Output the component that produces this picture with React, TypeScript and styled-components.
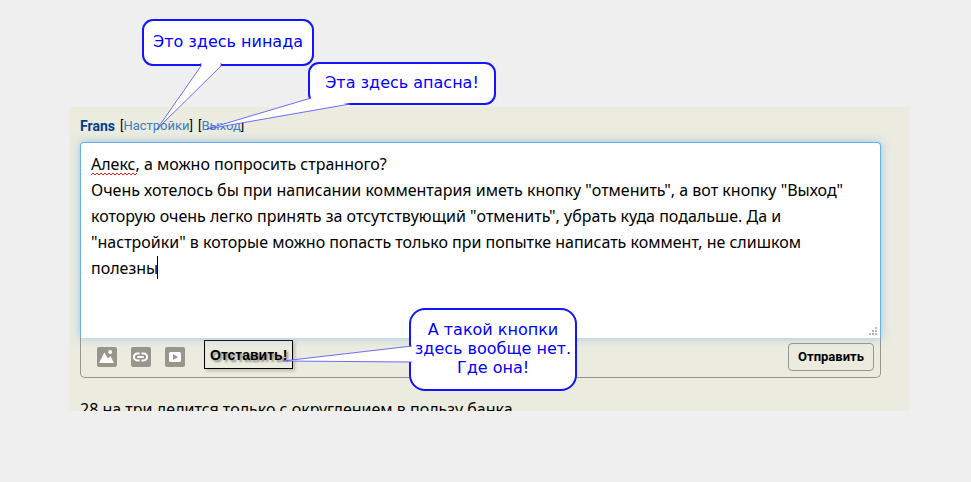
import React from 'react';
import styled, { createGlobalStyle } from 'styled-components';

const GlobalStyle = createGlobalStyle`
  *, *::before, *::after { box-sizing: border-box; }
  body {
    margin: 0;
    background: #efefef;
    color: #000;
    font-family: 'Noto Sans', 'Open Sans', sans-serif;
    font-size: 16px;
    line-height: 26px;
  }
`;

const Page = styled.div`
  padding: 107px 62px 71px 69px;
`;

const Sheet = styled.main`
  position: relative;
  padding: 6px 28px 0 11px;
  background: #ebebdf;
`;

const UserBar = styled.header`
  display: flex;
  align-items: center;
  gap: 5px;
  height: 26px;
  font-family: Roboto, 'Noto Sans', sans-serif;
  font-size: 13px;
`;

const UserName = styled.strong`
  color: #003e8f;
  font-size: 14px;
`;

const UserLink = styled.a`
  color: #3a7ebf;
  text-decoration: none;
`;

const Form = styled.form`
  display: flex;
  flex-direction: column;
  margin-top: 3px;
`;

const Editor = styled.div`
  position: relative;
  z-index: 1;
  display: flex;
  border-radius: 4px 4px 0 0;
  box-shadow: 0 0 8px rgba(102, 175, 233, 0.6);
`;

const CommentInput = styled.textarea`
  flex: 1;
  height: 196px;
  margin: 0;
  padding: 8px 10px;
  border: 1px solid #66afe9;
  border-bottom: 0;
  border-radius: 4px 4px 0 0;
  outline: 0;
  background: #fff;
  color: #000;
  font: inherit;
  resize: none;
  overflow: hidden;
`;

const SpellingMark = styled.svg`
  position: absolute;
  top: 30px;
  left: 11px;
  width: 46px;
  height: 4px;
`;

const Caret = styled.span`
  position: absolute;
  top: 114px;
  left: 77px;
  width: 1px;
  height: 23px;
  background: #000;
`;

const Grip = styled.svg`
  position: absolute;
  right: 3px;
  bottom: 2px;
  width: 9px;
  height: 9px;
`;

const Toolbar = styled.div`
  display: flex;
  align-items: center;
  gap: 14px;
  height: 40px;
  padding: 0 6px 2px 16px;
  border: 1px solid #97968c;
  border-top: 0;
  border-radius: 0 0 5px 5px;
`;

const IconButton = styled.button`
  display: flex;
  width: 20px;
  height: 20px;
  padding: 0;
  border: 0;
  border-radius: 2px;
  background: #97968c;
  color: #fff;
`;

const CancelButton = styled.button`
  height: 29px;
  margin: 0 0 4px 5px;
  padding: 0 5px;
  border: 1px solid #000;
  background: #ebebdf;
  box-shadow: 2px 2px 3px rgba(0, 0, 0, 0.2);
  color: #000;
  font: bold 14px/20px 'Liberation Sans', Arial, sans-serif;
  text-shadow: 2px 2px 2px rgba(0, 0, 0, 0.4);
`;

const SubmitButton = styled.button`
  width: 86px;
  height: 28px;
  margin-left: auto;
  padding: 0;
  border: 1px solid #97968c;
  border-radius: 4px;
  background: transparent;
  color: #000;
  font: bold 13px/20px Roboto, 'Noto Sans', sans-serif;
`;

const NextComment = styled.p`
  height: 15px;
  margin: 18px 0 0;
  overflow: hidden;
`;

type Spot = { $top: number; $left: number; $width: number; $height: number; $radius: number };

const Bubble = styled.aside<Spot>`
  position: absolute;
  z-index: 2;
  top: ${p => p.$top}px;
  left: ${p => p.$left}px;
  display: flex;
  align-items: center;
  justify-content: center;
  width: ${p => p.$width}px;
  height: ${p => p.$height}px;
  padding-bottom: 2px;
  border: 2px solid #1414ff;
  border-radius: ${p => p.$radius}px;
  background: #fff;
  color: #0000ff;
  font: 16px/19px 'DejaVu Sans', sans-serif;
  text-align: center;
  white-space: pre;
`;

const TailDrawing = styled.svg`
  position: absolute;
  top: -2px;
  left: -2px;
  width: 100%;
  height: 100%;
  overflow: visible;
`;

const BubbleText = styled.span`
  position: relative;
`;

function Callout({ tail, children, ...spot }: Spot & { tail: string; children: React.ReactNode }) {
  return (
    <Bubble {...spot}>
      <TailDrawing aria-hidden="true">
        <polyline points={tail} fill="#fff" stroke="#4a4aff" strokeWidth="0.8" />
      </TailDrawing>
      <BubbleText>{children}</BubbleText>
    </Bubble>
  );
}

const comment = `Алекс, а можно попросить странного?
Очень хотелось бы при написании комментария иметь кнопку "отменить", а вот кнопку "Выход" которую очень легко принять за отсутствующий "отменить", убрать куда подальше. Да и "настройки" в которые можно попасть только при попытке написать коммент, не слишком полезны`;

export default function App() {
  return (
    <Page>
      <GlobalStyle />
      <Sheet>
        <UserBar>
          <UserName>Frans</UserName>
          <span>[<UserLink href="#settings">Настройки</UserLink>]</span>
          <span>[<UserLink href="#logout">Выход</UserLink>]</span>
        </UserBar>
        <Form onSubmit={e => e.preventDefault()}>
          <Editor>
            <CommentInput aria-label="Комментарий" spellCheck={false} defaultValue={comment} />
            <SpellingMark viewBox="0 0 46 4" aria-hidden="true">
              <path
                d="M0 3 L2 1 L4 3 L6 1 L8 3 L10 1 L12 3 L14 1 L16 3 L18 1 L20 3 L22 1 L24 3 L26 1 L28 3 L30 1 L32 3 L34 1 L36 3 L38 1 L40 3 L42 1 L44 3 L46 1"
                fill="none"
                stroke="#e02020"
              />
            </SpellingMark>
            <Caret />
            <Grip viewBox="0 0 9 9" fill="#b8b8b8" aria-hidden="true">
              <path d="M6 0h2v2h-2zM6 3h2v2h-2zM3 3h2v2h-2zM6 6h2v2h-2zM3 6h2v2h-2zM0 6h2v2h-2z" />
            </Grip>
          </Editor>
          <Toolbar>
            <IconButton type="button" aria-label="Изображение">
              <svg width="20" height="20" viewBox="0 0 20 20" fill="currentColor">
                <path d="M2 16 L7.3 5.5 L11 11.5 L13.5 9 L17 16 Z" />
                <circle cx="13.2" cy="5" r="2" />
              </svg>
            </IconButton>
            <IconButton type="button" aria-label="Ссылка">
              <svg width="20" height="20" viewBox="0 0 20 20" fill="none" stroke="currentColor" strokeWidth="2">
                <path d="M8.6 6.4H6.4a3.5 3.5 0 0 0 0 7H8.6M10.4 6.4h2.2a3.5 3.5 0 0 1 0 7H10.4M6.3 9.9h6.4" />
              </svg>
            </IconButton>
            <IconButton type="button" aria-label="Видео">
              <svg width="20" height="20" viewBox="0 0 20 20">
                <rect x="4" y="5" width="12" height="10" rx="1.5" fill="currentColor" />
                <path d="M8 7v6l5-3z" fill="#97968c" />
              </svg>
            </IconButton>
            <CancelButton type="button">Отставить!</CancelButton>
            <SubmitButton type="submit">Отправить</SubmitButton>
          </Toolbar>
        </Form>
        <NextComment>28 на три делится только с округлением в пользу банка</NextComment>

        <Callout $top={-88} $left={73} $width={172} $height={47} $radius={11} tail="59,44 59,47 15,110 79,47 79,44">
          Это здесь нинада
        </Callout>
        <Callout $top={-45} $left={239} $width={188} $height={43} $radius={11} tail="3,36 -101,67 42,42">
          Эта здесь апасна!
        </Callout>
        <Callout $top={201} $left={340} $width={168} $height={83} $radius={16} tail="3,38 -126,53 3,54">
          {'А такой кнопки\nздесь вообще нет.\nГде она!'}
        </Callout>
      </Sheet>
    </Page>
  );
}
